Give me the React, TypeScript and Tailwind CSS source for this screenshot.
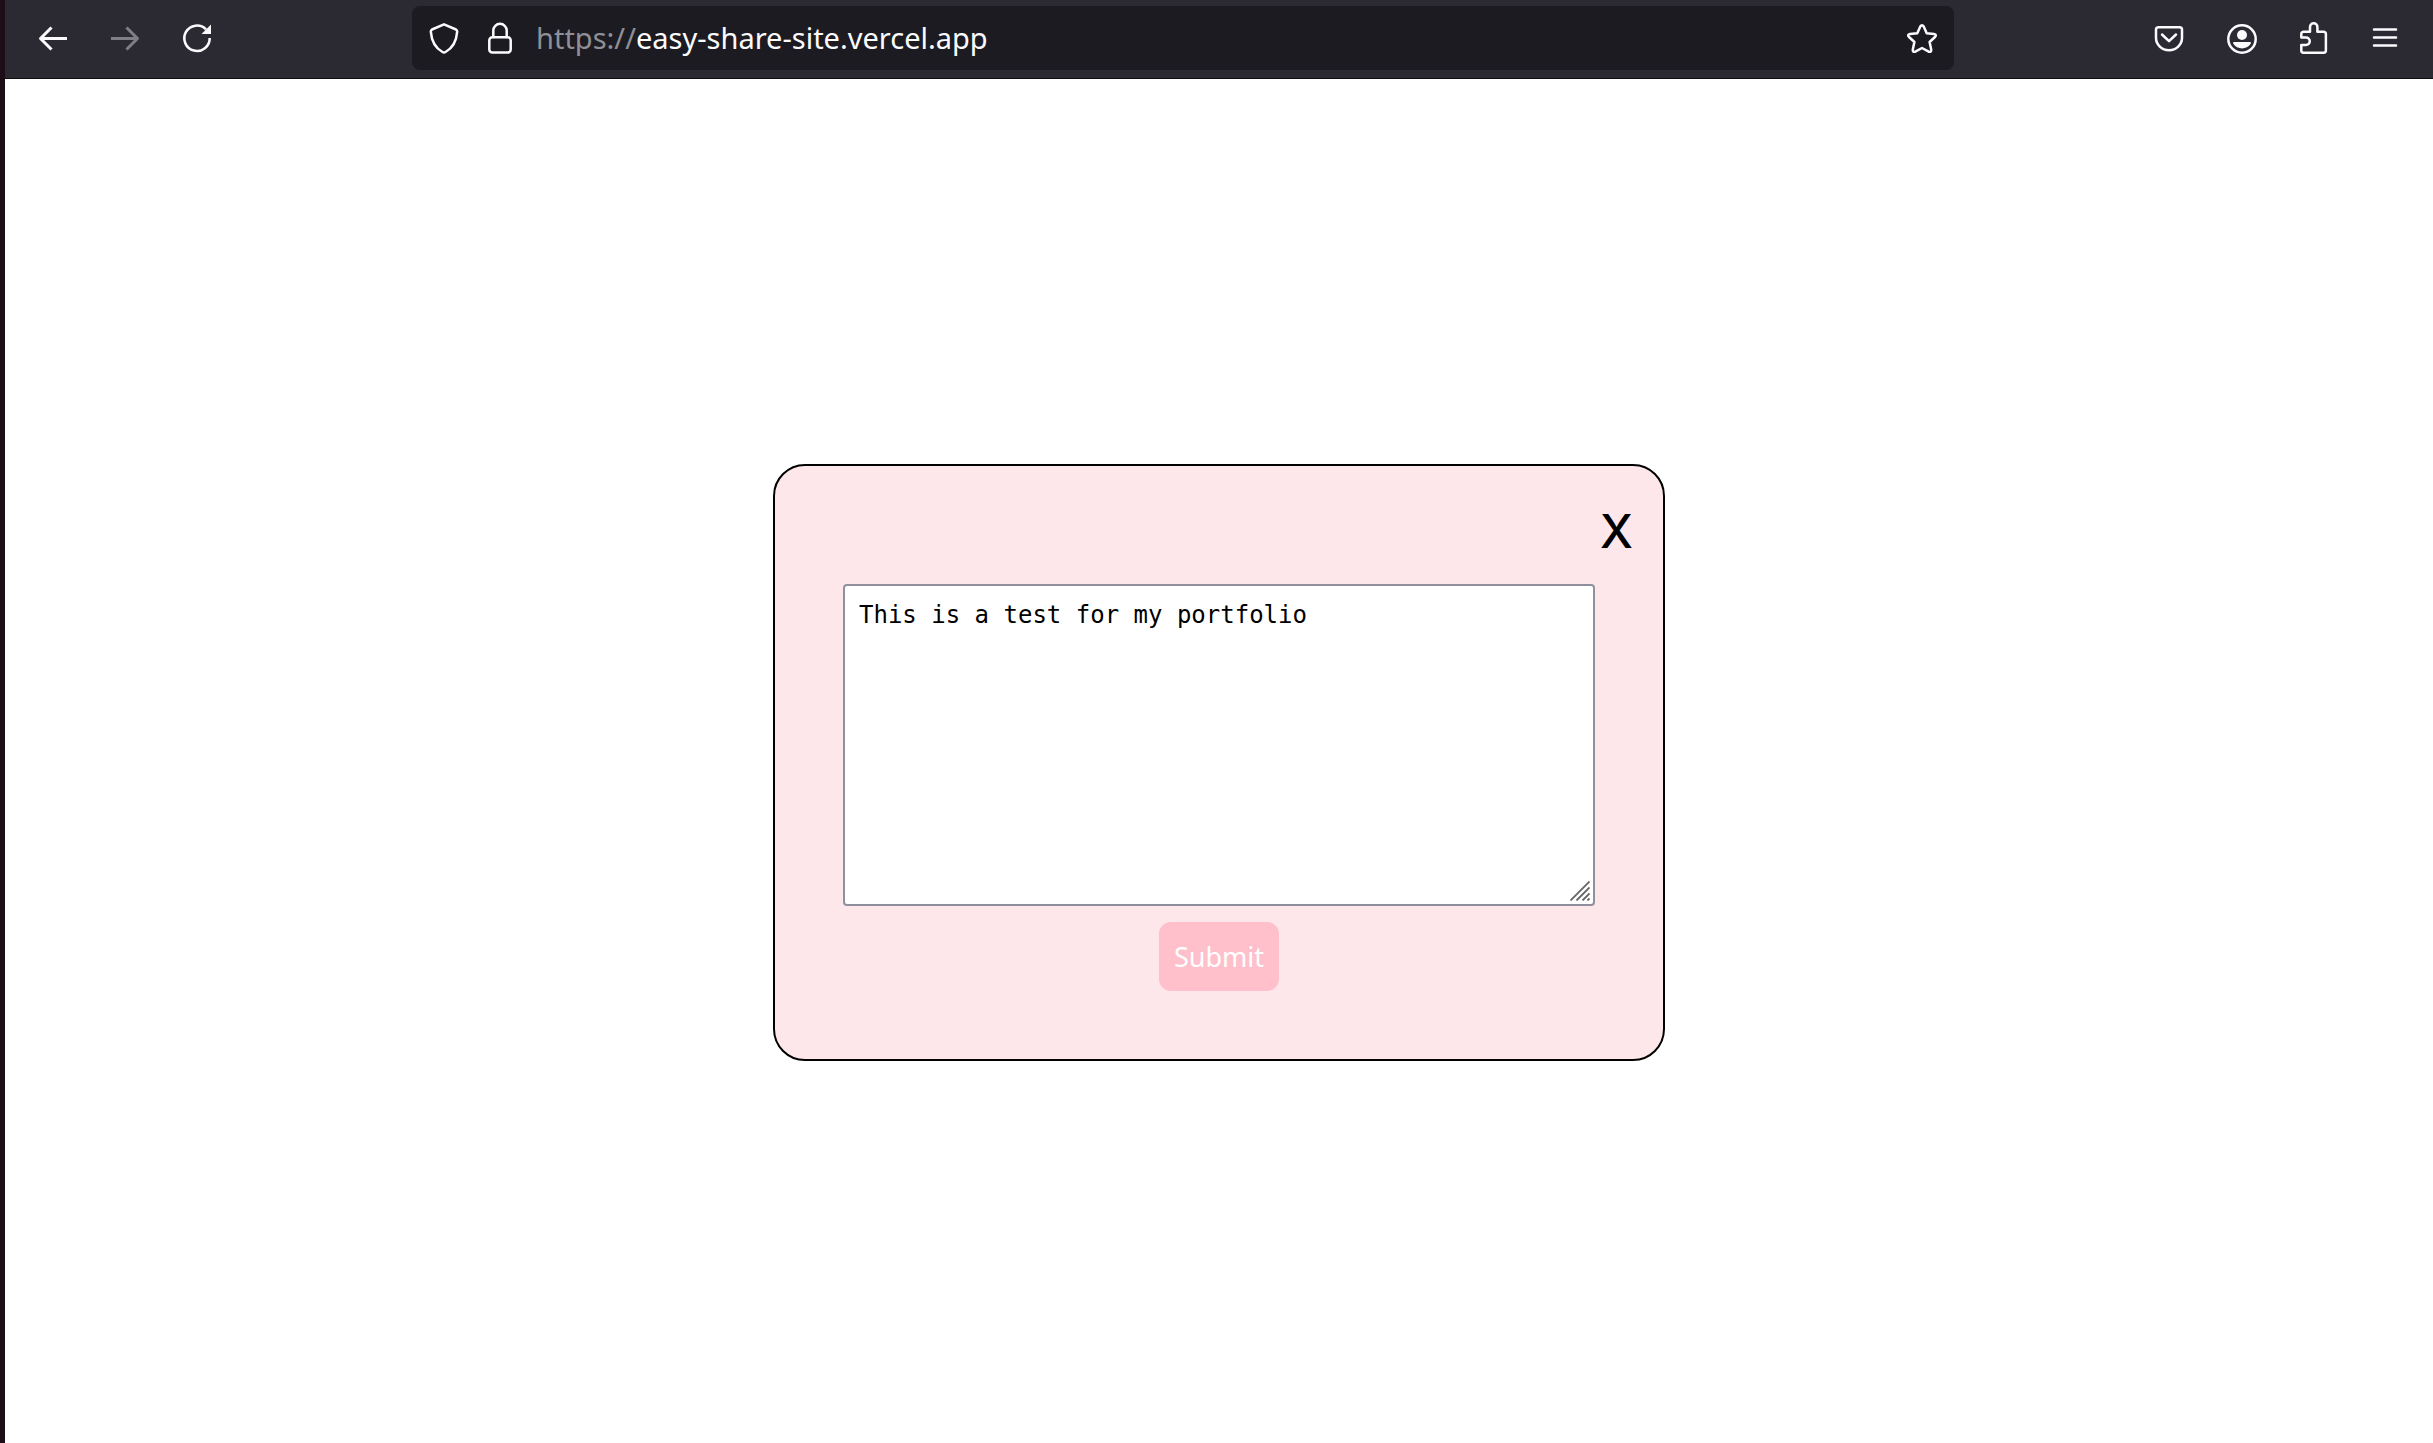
import { useState } from 'react'
import type { ReactNode } from 'react'

function Icon({ children }: { children: ReactNode }) {
  return (
    <svg
      viewBox="0 0 32 32"
      className="size-8 shrink-0"
      fill="none"
      stroke="currentColor"
      strokeWidth="2.5"
      strokeLinecap="round"
      strokeLinejoin="round"
      aria-hidden="true"
    >
      {children}
    </svg>
  )
}

function ToolButton({ label, disabled, children }: { label: string; disabled?: boolean; children: ReactNode }) {
  return (
    <button
      type="button"
      aria-label={label}
      disabled={disabled}
      className="flex size-8 items-center justify-center text-[#fbfbfe] disabled:text-[#7f7e87]"
    >
      <Icon>{children}</Icon>
    </button>
  )
}

function Toolbar() {
  return (
    <header className="flex items-center border-b border-[#0c0c0d] bg-[#2b2a33] pt-1.5 pr-8 pb-2 pl-8 text-[#fbfbfe]">
      <nav aria-label="History" className="flex shrink-0 gap-10">
        <ToolButton label="Back">
          <path d="M30 16.5H3.5M14.5 5.5L3.5 16.5l11 11" strokeLinecap="butt" strokeLinejoin="round" strokeWidth="3" />
        </ToolButton>
        <ToolButton label="Forward" disabled>
          <path d="M2 16.5h26.500M17.500 5.500l11 11-11 11" strokeLinecap="butt" strokeWidth="3" />
        </ToolButton>
        <ToolButton label="Reload">
          <path d="M25 7.300A12.700 12.700 0 1 0 28.700 16" strokeLinecap="butt" strokeWidth="2.600" />
          <path d="M30 2.500v9.500h-9.500z" fill="currentColor" stroke="none" />
        </ToolButton>
      </nav>
      <div className="ml-[199px] flex h-16 min-w-0 flex-1 items-center rounded-lg bg-[#1c1b22] px-4">
        <button type="button" aria-label="Tracking protection" className="mr-6">
          <Icon>
            <path d="M16 2.300L28 7.500Q29.300 8.200 29.200 9.700C28.500 19 24 26.500 17.500 30Q16 30.900 14.500 30C8 26.500 3.500 19 2.800 9.700Q2.700 8.200 4 7.500z" />
          </Icon>
        </button>
        <button type="button" aria-label="Site information" className="mr-5">
          <Icon>
            <rect x="5.300" y="15.200" width="21.400" height="15.400" rx="3" />
            <path d="M9.300 15V8.500a6.700 6.700 0 0 1 13.400 0V15" />
          </Icon>
        </button>
        <div className="min-w-0 flex-1 truncate font-['Noto_Sans',sans-serif] text-[29px] leading-10">
          <span className="text-[#8f8f96]">https://</span>easy-share-site.vercel.app
        </div>
        <button type="button" aria-label="Bookmark this page">
          <Icon>
            <path d="M14.300 4.500Q16 1.800 17.700 4.500L20.700 11.200L28 12Q31.200 12.600 29 15L23.600 20L25.200 27.500Q25.500 30.500 22.700 29.700L16 26L9.300 29.700Q6.500 30.500 6.800 27.500L8.400 20L3 15Q.800 12.600 4 12L11.300 11.200z" />
          </Icon>
        </button>
      </div>
      <div className="ml-[199px] flex shrink-0 gap-10">
        <ToolButton label="Save to Pocket">
          <path d="M5.500 5.300h21a2.500 2.500 0 0 1 2.500 2.500v8a13 12.500 0 0 1-26 0v-8a2.500 2.500 0 0 1 2.500-2.500z" />
          <path d="M9 12.500l7 6.700 7-6.700" />
        </ToolButton>
        <ToolButton label="Account">
          <circle cx="17" cy="17" r="13.700" />
          <circle cx="17" cy="13" r="5" fill="currentColor" stroke="none" />
          <path d="M9 20h16q1.500 0 .800 1.500c-4 6.500-13.600 6.500-17.600 0Q7.500 20 9 20z" fill="currentColor" stroke="none" />
        </ToolButton>
        <ToolButton label="Extensions">
          <path d="M6.500 30.700a2.200 2.200 0 0 1-2.200-2.200V23H9a3.300 3.300 0 0 0 0-7.500H4.300V12a2.200 2.200 0 0 1 2.200-2.200H13V5a3.700 3.700 0 0 1 7.400 0v4.800h6.300a2.200 2.200 0 0 1 2.200 2.200v16.500a2.200 2.200 0 0 1-2.200 2.200z" />
        </ToolButton>
        <ToolButton label="Open application menu">
          <path d="M5 7.500h22M5 15.500h22M5 23.500h22" />
        </ToolButton>
      </div>
    </header>
  )
}

function ShareDialog() {
  const [text, setText] = useState('This is a test for my portfolio')

  return (
    <form
      onSubmit={(event) => event.preventDefault()}
      className="flex w-full max-w-[892px] flex-col rounded-[32px] border-2 border-black bg-[#fee7ea] pb-[68px] font-['Noto_Sans',sans-serif]"
    >
      <div className="flex h-[118px] justify-end px-[30px] pt-[35px]">
        <button
          type="button"
          aria-label="Close"
          className="h-15 font-['Inter',sans-serif] text-[47px] leading-15 font-medium text-black"
        >
          X
        </button>
      </div>
      <div className="flex flex-col items-center gap-4 px-[68px]">
        <div className="relative w-full">
          <textarea
            aria-label="Text to share"
            spellCheck={false}
            value={text}
            onChange={(event) => setText(event.target.value)}
            className="block h-[322px] w-full resize-none rounded-sm border-2 border-[#8f8f9d] bg-white p-3.5 font-['DejaVu_Sans_Mono',monospace] text-2xl leading-[30px] text-black outline-none"
          />
          <svg
            viewBox="0 0 20 20"
            className="pointer-events-none absolute right-[5px] bottom-[5px] size-5"
            stroke="#666666"
            strokeWidth="1.800"
            aria-hidden="true"
          >
            <path d="M.500 19.500l19-19M6.500 19.500l13-13M12.500 19.500l7-7M17.500 19.500l2-2" />
          </svg>
        </div>
        <button type="submit" className="rounded-xl bg-[#ffc0cb] px-[15px] py-4 text-[27px] leading-[37px] text-white">
          Submit
        </button>
      </div>
    </form>
  )
}

export default function App() {
  return (
    <div className="flex min-h-screen flex-col border-l-5 border-[#1b0e16] bg-white">
      <Toolbar />
      <main className="flex flex-1 items-center justify-center pt-0.5">
        <ShareDialog />
      </main>
    </div>
  )
}
